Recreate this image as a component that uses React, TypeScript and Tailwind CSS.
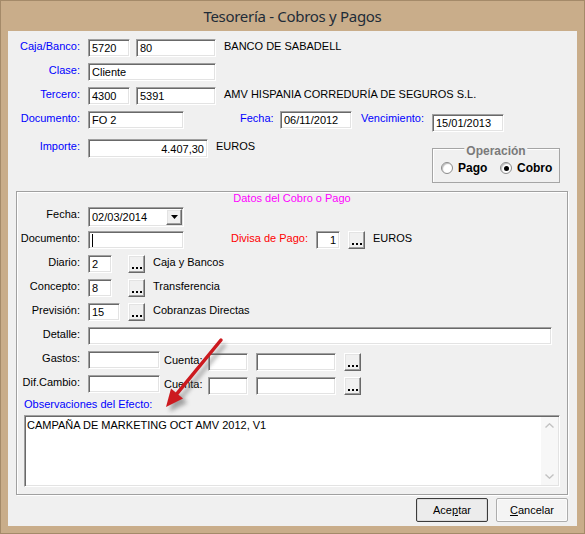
import React from 'react';

// classic 3D borders for edit boxes and small buttons
const sunken =
  'bg-white border border-t-[#a0a0a0] border-l-[#a0a0a0] border-r-white border-b-white shadow-[inset_1px_1px_0_#696969,inset_-1px_-1px_0_#e3e3e3]';
const raised =
  'bg-[#f0f0f0] border border-t-white border-l-white border-r-[#696969] border-b-[#696969] shadow-[inset_-1px_-1px_0_#a0a0a0,inset_1px_1px_0_#e3e3e3]';

function Field({
  className = '',
  children,
  right,
}: {
  className?: string;
  children?: React.ReactNode;
  right?: boolean;
}) {
  return (
    <div
      className={`${sunken} ${className} flex items-center px-[3px] leading-[14px] whitespace-nowrap overflow-hidden ${
        right ? 'justify-end' : ''
      }`}
    >
      {children}
    </div>
  );
}

function Lbl({ children, className = '' }: { children: React.ReactNode; className?: string }) {
  return <div className={`leading-[14px] whitespace-nowrap ${className}`}>{children}</div>;
}

function Dots({ className = '' }: { className?: string }) {
  return (
    <div className={`${raised} ${className} w-[17px] h-[18px] flex items-end justify-center pb-[3px]`}>
      <div className="flex gap-[2px]">
        <span className="w-[2px] h-[2px] bg-black" />
        <span className="w-[2px] h-[2px] bg-black" />
        <span className="w-[2px] h-[2px] bg-black" />
      </div>
    </div>
  );
}

function Radio({ checked, label }: { checked?: boolean; label: string }) {
  return (
    <div className="w-[64px] flex items-center gap-[5px]">
      <span className="w-[12px] h-[12px] rounded-full bg-white border border-[#8a8a8a] shadow-[inset_1px_1px_1px_#bdbdbd] flex items-center justify-center">
        {checked && <span className="w-[5px] h-[5px] rounded-full bg-black" />}
      </span>
      <span className="font-bold text-[12px] leading-[14px]">{label}</span>
    </div>
  );
}

function TopSection() {
  return (
    <div className="flex flex-col pt-[8px]">
      <div className="flex items-start h-[18px]">
        <Lbl className="w-[72px] text-right text-[#0000ff]">Caja/Banco:</Lbl>
        <Field className="ml-[8px] w-[42px] h-[18px]">5720</Field>
        <Field className="ml-[6px] w-[80px] h-[18px]">80</Field>
        <Lbl className="ml-[8px]">BANCO DE SABADELL</Lbl>
      </div>
      <div className="flex items-start h-[18px] mt-[6px]">
        <Lbl className="w-[72px] text-right text-[#0000ff]">Clase:</Lbl>
        <Field className="ml-[8px] w-[128px] h-[18px]">Cliente</Field>
      </div>
      <div className="flex items-start h-[18px] mt-[6px]">
        <Lbl className="w-[72px] text-right text-[#0000ff]">Tercero:</Lbl>
        <Field className="ml-[8px] w-[42px] h-[18px]">4300</Field>
        <Field className="ml-[6px] w-[80px] h-[18px]">5391</Field>
        <Lbl className="ml-[8px]">AMV HISPANIA CORREDURÍA DE SEGUROS S.L.</Lbl>
      </div>
      <div className="flex items-start h-[21px] mt-[6px]">
        <Lbl className="w-[72px] text-right text-[#0000ff]">Documento:</Lbl>
        <Field className="ml-[8px] w-[96px] h-[18px]">FO 2</Field>
        <Lbl className="ml-[56px] w-[32px] text-right text-[#0000ff]">Fecha:</Lbl>
        <Field className="ml-[8px] w-[72px] h-[18px]">06/11/2012</Field>
        <Lbl className="ml-[4px] w-[68px] text-right text-[#0000ff]">Vencimiento:</Lbl>
        <Field className="ml-[8px] mt-[3px] w-[72px] h-[18px]">15/01/2013</Field>
      </div>
      <div className="flex items-start mt-[7px]">
        <Lbl className="w-[72px] text-right text-[#0000ff]">Importe:</Lbl>
        <Field className="ml-[8px] w-[120px] h-[19px]" right>
          4.407,30
        </Field>
        <Lbl className="ml-[8px]">EUROS</Lbl>
        <div className="relative ml-auto mr-[17px] mt-[9px] w-[128px] h-[35px] border border-[#a5a5a5] shadow-[inset_1px_1px_0_#fff]">
          <span className="absolute top-[-4px] left-1/2 -translate-x-1/2 bg-[#f0f0f0] px-[2px] font-bold text-[12px] leading-[12px] text-[#7a7a7a]">
            Operación
          </span>
          <div className="flex items-center pt-[12px] pl-[8px]">
            <Radio label="Pago" />
            <Radio label="Cobro" checked />
          </div>
        </div>
      </div>
    </div>
  );
}

function Combo() {
  return (
    <div className={`${sunken} ml-[8px] w-[96px] h-[20px] flex items-center justify-between pl-[3px] pr-[1px]`}>
      <span className="leading-[14px]">02/03/2014</span>
      <span className={`${raised} w-[16px] h-[16px] flex items-center justify-center`}>
        <svg width="7" height="4" viewBox="0 0 7 4">
          <path d="M0 0h7L3.5 4z" fill="#000" />
        </svg>
      </span>
    </div>
  );
}

function Notes() {
  return (
    <div className={`${sunken} ml-[7px] mt-[4px] w-[536px] h-[72px] flex`}>
      <div className="flex-1 pl-[2px] pt-[2px] leading-[14px]">CAMPAÑA DE MARKETING OCT AMV 2012, V1</div>
      <div className="w-[17px] mr-[1px] my-[1px] bg-[#f7f7f7] flex flex-col items-center justify-between py-[6px]">
        <svg width="9" height="5" viewBox="0 0 9 5">
          <path d="M0.5 4.5L4.5 0.8L8.5 4.5" fill="none" stroke="#c2c2c2" strokeWidth="1.4" />
        </svg>
        <svg width="9" height="5" viewBox="0 0 9 5">
          <path d="M0.5 0.5L4.5 4.2L8.5 0.5" fill="none" stroke="#c2c2c2" strokeWidth="1.4" />
        </svg>
      </div>
    </div>
  );
}

function DetailBox() {
  return (
    <div className="ml-[8px] mt-[8px] w-[552px] border border-[#a0a0a0] shadow-[inset_1px_1px_0_#fff,1px_1px_0_#fff] pb-[7px]">
      <div className="text-center text-[#ff00ff] leading-[12px]">Datos del Cobro o Pago</div>

      <div className="flex items-start mt-[3px]">
        <Lbl className="w-[63px] text-right">Fecha:</Lbl>
        <Combo />
      </div>

      <div className="flex items-start h-[18px] mt-[4px]">
        <Lbl className="w-[63px] text-right">Documento:</Lbl>
        <Field className="ml-[8px] w-[96px] h-[18px]">
          <span className="w-px h-[13px] bg-black" />
        </Field>
        <Lbl className="w-[124px] text-right text-[#ff0000]">Divisa de Pago:</Lbl>
        <Field className="ml-[8px] w-[24px] h-[18px]" right>
          1
        </Field>
        <Dots className="ml-[8px]" />
        <Lbl className="ml-[8px]">EUROS</Lbl>
      </div>

      <div className="flex items-start h-[18px] mt-[6px]">
        <Lbl className="w-[63px] text-right">Diario:</Lbl>
        <Field className="ml-[8px] w-[24px] h-[18px]">2</Field>
        <Dots className="ml-[16px]" />
        <Lbl className="ml-[8px]">Caja y Bancos</Lbl>
      </div>

      <div className="flex items-start h-[18px] mt-[6px]">
        <Lbl className="w-[63px] text-right">Concepto:</Lbl>
        <Field className="ml-[8px] w-[24px] h-[18px]">8</Field>
        <Dots className="ml-[16px]" />
        <Lbl className="ml-[8px]">Transferencia</Lbl>
      </div>

      <div className="flex items-start h-[18px] mt-[6px]">
        <Lbl className="w-[63px] text-right">Previsión:</Lbl>
        <Field className="ml-[8px] w-[32px] h-[18px]">15</Field>
        <Dots className="ml-[8px]" />
        <Lbl className="ml-[8px]">Cobranzas Directas</Lbl>
      </div>

      <div className="flex items-start h-[18px] mt-[6px]">
        <Lbl className="w-[63px] text-right">Detalle:</Lbl>
        <Field className="ml-[8px] w-[464px] h-[18px]" />
      </div>

      {[
        { label: 'Gastos:', mt: 'mt-[6px]' },
        { label: 'Dif.Cambio:', mt: 'mt-[4px]' },
      ].map((r) => (
        <div key={r.label} className={`flex items-start h-[20px] ${r.mt}`}>
          <Lbl className="w-[63px] text-right">{r.label}</Lbl>
          <Field className="ml-[8px] w-[72px] h-[18px]" />
          <Lbl className="ml-[4px] mt-[2px] w-[44px]">Cuenta:</Lbl>
          <Field className="mt-[2px] w-[40px] h-[18px]" />
          <Field className="ml-[8px] mt-[2px] w-[80px] h-[18px]" />
          <Dots className="ml-[8px] mt-[2px]" />
        </div>
      ))}

      <Lbl className="ml-[7px] mt-[2px] text-[#0000ff]">Observaciones del Efecto:</Lbl>
      <Notes />
    </div>
  );
}

function DialogButton({ children, primary }: { children: React.ReactNode; primary?: boolean }) {
  return (
    <div
      className={`w-[72px] h-[24px] rounded-[2px] flex items-center justify-center leading-[14px] ${
        primary
          ? 'border border-[#3c3c3c] bg-[#ececec] shadow-[inset_0_0_0_1px_#dadada]'
          : 'border border-[#adadad] bg-[#f4f4f4] shadow-[inset_0_0_0_1px_#fbfbfb]'
      }`}
    >
      {children}
    </div>
  );
}

function Arrow() {
  return (
    <svg className="absolute -left-px -top-px pointer-events-none" width="585" height="534" viewBox="0 0 585 534">
      <defs>
        <filter id="arrowShadow" x="-50%" y="-50%" width="200%" height="200%">
          <feGaussianBlur stdDeviation="2" />
        </filter>
      </defs>
      <g transform="translate(4 4)" fill="#6d6d6d" stroke="#6d6d6d" opacity="0.6" filter="url(#arrowShadow)">
        <line x1="221" y1="340" x2="177" y2="393.6" strokeWidth="3.5" />
        <polygon points="166,407 183,398.5 171,388.5" />
      </g>
      <line x1="221" y1="340" x2="177" y2="393.6" stroke="#cc1a1f" strokeWidth="3.5" strokeLinecap="round" />
      <polygon points="166,407 183,398.5 171,388.5" fill="#cc1a1f" />
    </svg>
  );
}

export default function App() {
  return (
    <div className="relative w-[585px] h-[534px] bg-[#c9ad8a] border border-[#a48a69] flex flex-col font-['Liberation_Sans',Arial,sans-serif] text-[11px] text-black">
      <div className="h-[30px] flex items-center justify-center font-['Noto_Sans',sans-serif] text-[15px] tracking-[-0.3px] text-[#1e2c38]">
        Tesorería - Cobros y Pagos
      </div>
      <div className="mx-[7px] h-[495px] bg-[#f0f0f0] flex flex-col">
        <TopSection />
        <DetailBox />
        <div className="flex justify-end gap-[8px] mt-[3px] pr-[9px]">
          <DialogButton primary>
            <span>
              Ace<u>p</u>tar
            </span>
          </DialogButton>
          <DialogButton>
            <span>
              <u>C</u>ancelar
            </span>
          </DialogButton>
        </div>
      </div>
      <Arrow />
    </div>
  );
}
